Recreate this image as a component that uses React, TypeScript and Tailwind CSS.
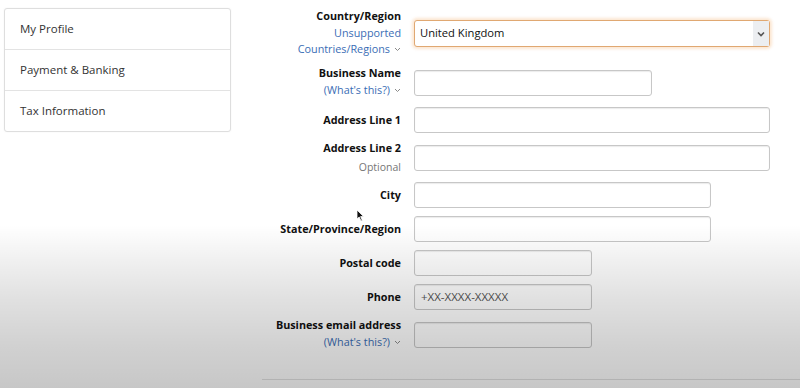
import React from "react";

const Chevron = () => (
  <svg width="7" height="5" viewBox="0 0 7 5" className="inline-block ml-[4px] mb-[1px]">
    <path d="M1 1 L3.5 3.5 L6 1" fill="none" stroke="#8a8a8a" strokeWidth="1" />
  </svg>
);

const Input = ({ w, children }: { w: string; children?: React.ReactNode }) => (
  <div
    className={`${w} h-[26px] rounded-[3px] border border-[#c7c7c7] bg-white shadow-[inset_0_1px_1px_rgba(0,0,0,0.08)] flex items-center px-[6px] text-[11.5px] text-[#555]`}
  >
    {children}
  </div>
);

export default function App() {
  return (
    <div
      className="relative w-[800px] h-[388px] overflow-hidden bg-white text-[#111]"
      style={{ fontFamily: '"Open Sans", "Noto Sans", Arial, sans-serif' }}
    >
      <div className="flex">
        {/* Sidebar */}
        <div className="ml-[4px] mt-[8px] w-[227px] h-[124px] rounded-[3px] border border-[#dedede] bg-white shadow-[0_0_2px_rgba(0,0,0,0.05)] flex flex-col text-[11.5px] text-[#333]">
          <div className="h-[41px] flex items-center pl-[15px] border-b border-[#e3e3e3]">My Profile</div>
          <div className="h-[41px] flex items-center pl-[15px] border-b border-[#e3e3e3]">Payment &amp; Banking</div>
          <div className="flex-1 flex items-center pl-[15px]">Tax Information</div>
        </div>

        {/* Form */}
        <div className="ml-[31px] flex-1 flex flex-col">
          {/* Country */}
          <div className="mt-[8px] h-[49px] flex">
            <div className="w-[139px] text-right text-[10.8px] leading-[16.5px]">
              <div className="font-bold">Country/Region</div>
              <div className="text-[#3a6db5]">Unsupported</div>
              <div className="text-[#3a6db5]">Countries/Regions<Chevron /></div>
            </div>
            <div className="ml-[13px] mt-[12px] w-[356px] h-[27px] rounded-[3px] border border-[#e0a872] bg-white shadow-[0_0_3px_2px_rgba(231,118,0,0.18)] flex items-stretch">
              <div className="flex-1 flex items-center pl-[5px] text-[11.2px] text-[#111]">United Kingdom</div>
              <div className="w-[16px] bg-[#eceef1] flex items-center justify-center">
                <svg width="8" height="6" viewBox="0 0 8 6">
                  <path d="M1 1.5 L4 4.5 L7 1.5" fill="none" stroke="#555" strokeWidth="1.6" />
                </svg>
              </div>
            </div>
          </div>

          {/* Business Name */}
          <div className="mt-[8px] h-[32px] flex">
            <div className="w-[139px] text-right text-[10.8px] leading-[16.5px]">
              <div className="font-bold">Business Name</div>
              <div className="text-[#3a6db5]">(What's this?)<Chevron /></div>
            </div>
            <div className="ml-[13px] mt-[5px]">
              <Input w="w-[238px]" />
            </div>
          </div>

          {/* Address Line 1 */}
          <div className="mt-[10px] flex items-center">
            <div className="w-[139px] text-right text-[10.8px] font-bold">Address Line 1</div>
            <div className="ml-[13px]">
              <Input w="w-[356px]" />
            </div>
          </div>

          {/* Address Line 2 */}
          <div className="mt-[7px] h-[35px] flex">
            <div className="w-[139px] text-right text-[10.8px] leading-[16px]">
              <div className="font-bold">Address Line 2</div>
              <div className="mt-[3px] text-[10.5px] text-[#767676]">Optional</div>
            </div>
            <div className="ml-[13px] mt-[5px]">
              <Input w="w-[356px]" />
            </div>
          </div>

          {/* City */}
          <div className="mt-[7px] flex items-center">
            <div className="w-[139px] text-right text-[10.8px] font-bold">City</div>
            <div className="ml-[13px]">
              <Input w="w-[297px]" />
            </div>
          </div>

          {/* State */}
          <div className="mt-[8px] flex items-center">
            <div className="w-[139px] text-right text-[10.8px] font-bold whitespace-nowrap">State/Province/Region</div>
            <div className="ml-[13px]">
              <Input w="w-[297px]" />
            </div>
          </div>

          {/* Postal code */}
          <div className="mt-[8px] flex items-center">
            <div className="w-[139px] text-right text-[10.8px] font-bold">Postal code</div>
            <div className="ml-[13px]">
              <Input w="w-[178px]" />
            </div>
          </div>

          {/* Phone */}
          <div className="mt-[8px] flex items-center">
            <div className="w-[139px] text-right text-[10.8px] font-bold">Phone</div>
            <div className="ml-[13px]">
              <Input w="w-[178px]">+XX-XXXX-XXXXX</Input>
            </div>
          </div>

          {/* Email */}
          <div className="mt-[7px] h-[33px] flex">
            <div className="w-[139px] text-right text-[10.8px] leading-[16.5px] whitespace-nowrap">
              <div className="font-bold">Business email address</div>
              <div className="text-[#3a6db5]">(What's this?)<Chevron /></div>
            </div>
            <div className="ml-[13px] mt-[5px]">
              <Input w="w-[178px]" />
            </div>
          </div>

          <div className="mt-[29px] border-t border-[#e2e2e2]" />
        </div>
      </div>

      {/* mouse cursor */}
      <svg className="absolute left-[356px] top-[209px]" width="9" height="13" viewBox="0 0 9 13">
        <path d="M1 1 L1 10 L3.2 8 L5 12 L6.3 11.4 L4.6 7.6 L7.6 7.6 Z" fill="#111" stroke="#fff" strokeWidth="0.8" />
      </svg>

      {/* video vignette */}
      <div className="pointer-events-none absolute inset-0 bg-[linear-gradient(to_bottom,transparent_0px,transparent_225px,rgba(0,0,0,0.06)_260px,rgba(0,0,0,0.12)_300px,rgba(0,0,0,0.18)_345px,rgba(0,0,0,0.22)_388px)]" />
    </div>
  );
}
